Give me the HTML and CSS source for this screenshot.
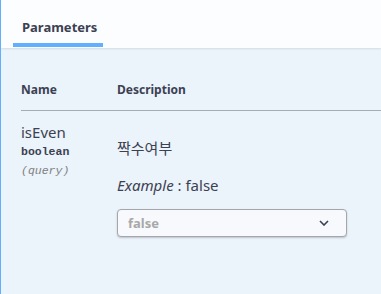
FILE: index.html
```html
<!DOCTYPE html>
<html lang="ko">
<head>
    <meta charset="UTF-8">
    <title>Parameters</title>
    <link rel="stylesheet" href="styles.css">
</head>
<body>
    <div class="opblock">
        <div class="section-header">
            <div class="tab-item">
                <h4>Parameters</h4>
            </div>
        </div>
        <div class="table-container">
            <div class="row head">
                <div class="col-name">Name</div>
                <div class="col-desc">Description</div>
            </div>
            <div class="row param">
                <div class="col-name">
                    <div class="param-name">isEven</div>
                    <div class="param-type">boolean</div>
                    <div class="param-in">(query)</div>
                </div>
                <div class="col-desc">
                    <p class="desc">짝수여부</p>
                    <p class="example"><i>Example</i> : false</p>
                    <div class="select">
                        <span>false</span>
                        <svg width="10" height="6" viewBox="0 0 10 6"><path d="M1 1l4 4 4-4" fill="none" stroke="#3b4151" stroke-width="1.6"/></svg>
                    </div>
                </div>
            </div>
        </div>
    </div>
</body>
</html>
```

FILE: styles.css
```css
html, body {
    margin: 0;
    padding: 0;
}
body {
    font-family: "Noto Sans", "Noto Sans CJK KR", sans-serif;
    color: #3b4151;
    background: #ebf3fb;
}
.opblock {
    border-left: 1px solid #61affe;
    background: #ebf3fb;
    height: 294px;
    overflow: hidden;
}
.section-header {
    height: 48px;
    background: #fcfdff;
    box-shadow: 0 1px 2px rgba(0, 0, 0, 0.1);
    padding: 0 0 0 12px;
    display: flex;
    align-items: flex-end;
}
.tab-item {
    width: 90px;
    height: 48px;
    display: flex;
    flex-direction: column;
    justify-content: space-between;
}
.tab-item h4 {
    margin: 0;
    padding: 18px 0 0 9px;
    font-size: 13px;
    font-weight: bold;
    line-height: 18px;
}
.tab-item::after {
    content: "";
    display: block;
    height: 4px;
    margin-bottom: 1px;
    background: #61affe;
}
.table-container {
    padding: 0 0 0 20px;
}
.row {
    display: flex;
}
.col-name {
    width: 96px;
}
.col-desc {
    flex: 1;
}
.row.head {
    padding: 34px 0 12px;
    font-size: 12px;
    font-weight: bold;
    line-height: 16px;
    border-bottom: 1px solid rgba(59, 65, 81, 0.4);
}
.row.param {
    padding-top: 11px;
}
.param-name {
    font-size: 15px;
    line-height: 20px;
}
.param-type {
    font-family: "Liberation Mono", monospace;
    font-size: 11.5px;
    font-weight: bold;
    line-height: 16px;
    margin-top: 2px;
}
.param-in {
    font-family: "Liberation Mono", monospace;
    font-size: 11.5px;
    font-style: italic;
    color: #808080;
    line-height: 16px;
    margin-top: 3px;
}
.desc {
    margin: 14px 0 0;
    font-size: 15px;
    line-height: 24px;
}
.example {
    margin: 14px 0 0;
    font-size: 15px;
    line-height: 22px;
}
.select {
    margin-top: 13px;
    height: 26px;
    border: 1px solid #a4a6ab;
    border-radius: 4px;
    background: #f7f9fc;
    box-shadow: 0 1px 2px rgba(0, 0, 0, 0.2);
    display: flex;
    align-items: center;
    justify-content: space-between;
    padding: 0 17px 0 10px;
    width: 201px;
}
.select span {
    font-size: 13px;
    font-weight: bold;
    color: #a8a8a8;
}
```
